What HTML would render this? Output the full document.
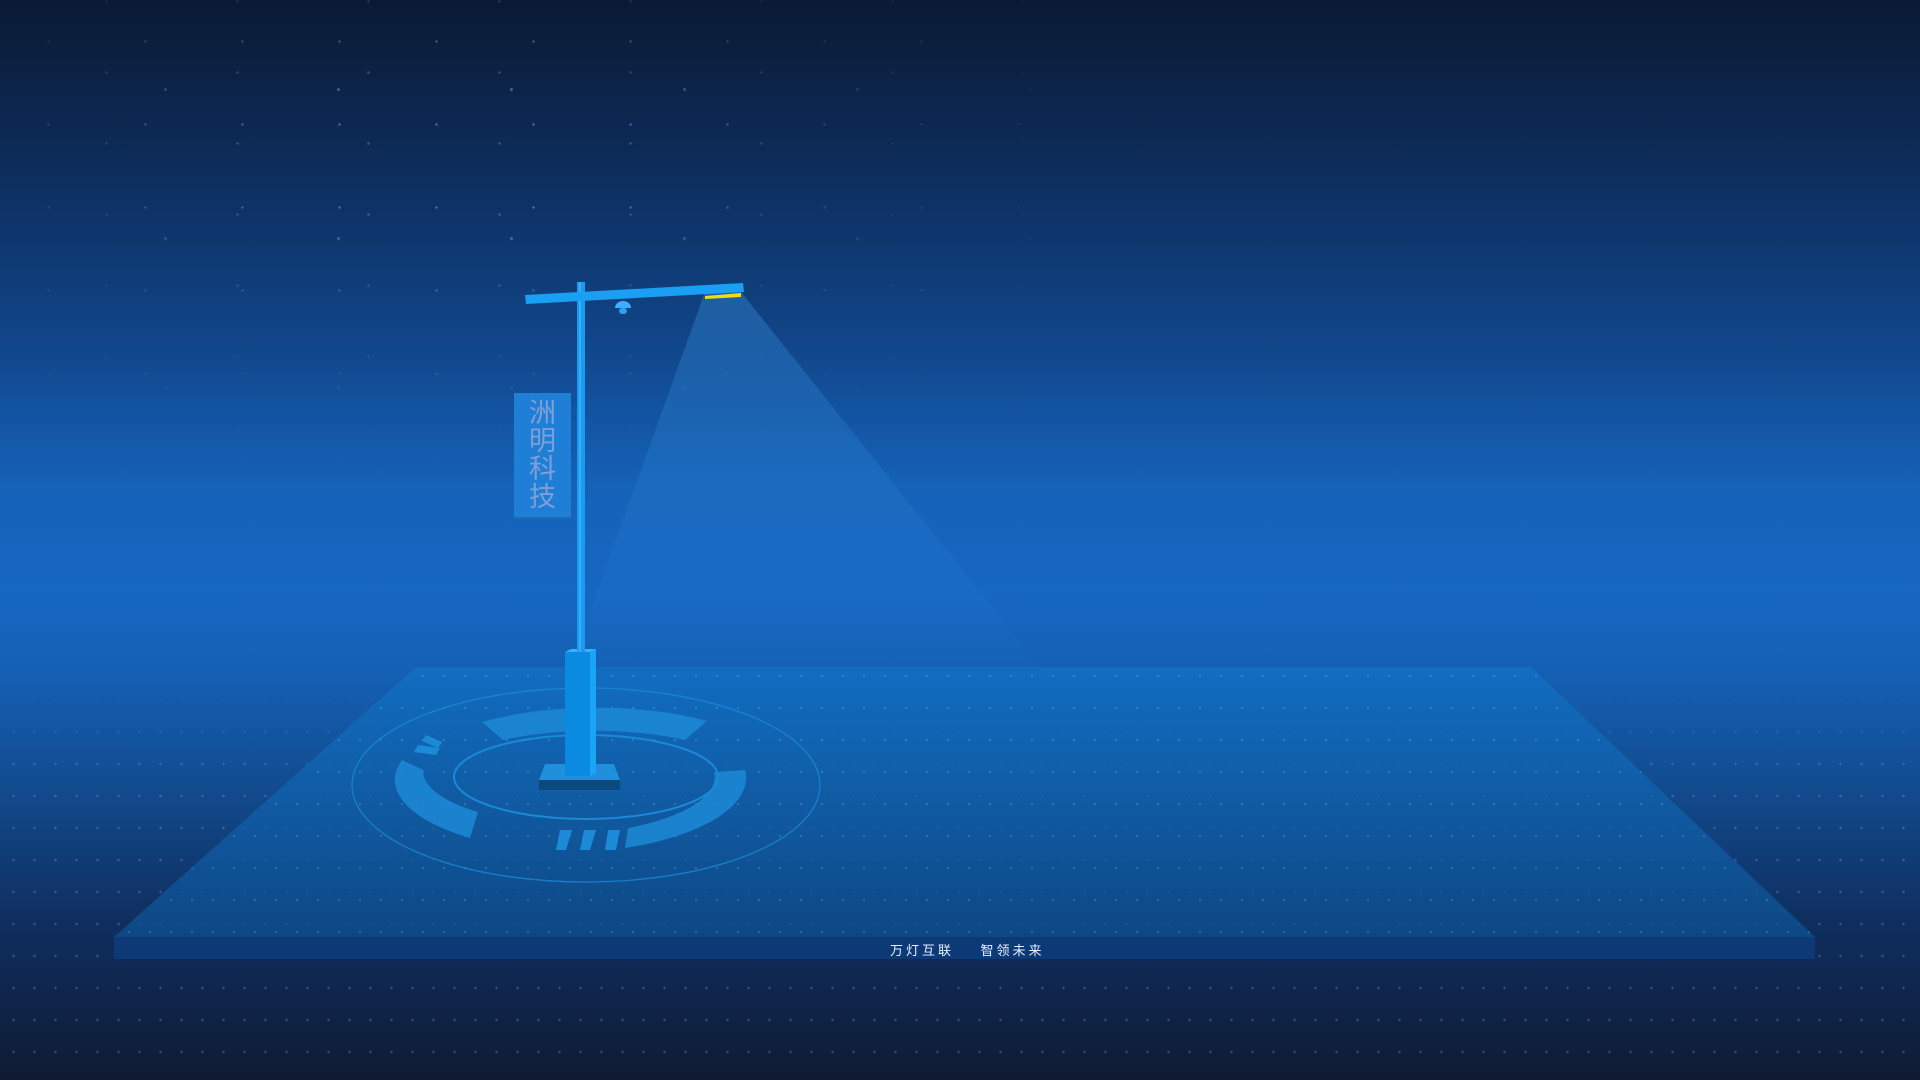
<!DOCTYPE html>
<html><head><meta charset="utf-8">
<style>
html,body{margin:0;padding:0}
body{width:1920px;height:1080px;overflow:hidden;position:relative;
background:linear-gradient(180deg,#0a1a33 0%,#0d2c5a 15%,#11468a 32%,#1562b8 45%,#1667c2 55%,#1560b4 62%,#124d92 72%,#0f2f60 85%,#0f1b33 100%);
font-family:"Liberation Sans","Noto Sans CJK SC",sans-serif}
.stars{position:absolute;left:0;top:0;width:1920px;height:600px;
background-image:
radial-gradient(circle,rgba(150,200,255,.6) 1px,transparent 1.5px),
radial-gradient(circle,rgba(150,200,255,.45) 1px,transparent 1.5px),
radial-gradient(circle,rgba(180,220,255,.5) 1.2px,transparent 1.8px);
background-size:97px 83px,131px 71px,173px 149px;
background-position:0 0,41px 37px,79px 15px;
-webkit-mask-image:radial-gradient(ellipse 700px 350px at 450px 150px,#000 20%,rgba(0,0,0,.35) 60%,transparent 100%);
mask-image:radial-gradient(ellipse 700px 350px at 450px 150px,#000 20%,rgba(0,0,0,.35) 60%,transparent 100%);opacity:.7}
.dots{position:absolute;left:0;top:680px;width:1920px;height:400px;
background-image:radial-gradient(circle,rgba(140,190,240,.28) 1px,transparent 1.5px);
background-size:21px 32px;background-position:3px 4px;
-webkit-mask-image:linear-gradient(180deg,transparent 0,#000 25%);mask-image:linear-gradient(180deg,transparent 0,#000 25%)}
.tag{position:absolute;left:890px;top:940px;color:#e8f0ff;font-size:13px;letter-spacing:3px;white-space:pre;
font-family:"Liberation Sans","Noto Sans CJK SC",sans-serif}
.ban{position:absolute;left:514px;top:393px;width:57px;height:126px;background:#1f7fd6;box-shadow:inset 0 -2px 0 #1a6ab8;
color:#7e9fd8;font-size:27px;line-height:28px;text-align:center;padding-top:4px;box-sizing:border-box;
font-family:"Noto Sans CJK SC",sans-serif}
</style></head><body>
<div class="stars"></div>
<div class="dots"></div>
<svg width="1920" height="1080" style="position:absolute;left:0;top:0">
<defs>
<linearGradient id="cone" x1="0" y1="0" x2="0" y2="1">
<stop offset="0" stop-color="#3a9ae6" stop-opacity=".35"/>
<stop offset="1" stop-color="#2a88dc" stop-opacity=".03"/>
</linearGradient>
<linearGradient id="plat" x1="0" y1="0" x2="0" y2="1">
<stop offset="0" stop-color="#1170c4"/>
<stop offset="1" stop-color="#0e4f8e"/>
</linearGradient>
<pattern id="pd" width="21" height="32" patternUnits="userSpaceOnUse"><circle cx="3" cy="4" r="1" fill="rgba(150,200,245,.3)"/></pattern>
</defs>
<polygon points="705,292 741,292 1040,667 570,667" fill="url(#cone)"/>
<polygon points="416,667 1531,667 1815,937 114,937" fill="url(#plat)" opacity=".8"/>
<polygon points="416,667 1531,667 1815,937 114,937" fill="url(#pd)"/>
<rect x="114" y="937" width="1701" height="22" fill="#0d3a76"/>
<!-- rings -->
<ellipse cx="586" cy="785" rx="234" ry="97" fill="none" stroke="#1a8ad6" stroke-width="1.3" opacity=".8"/>
<ellipse cx="586" cy="777" rx="132" ry="42" fill="none" stroke="#1a8ad6" stroke-width="2"/>
<path d="M482,722 A188,70 0 0 1 707,721 L685,740 A160,52 0 0 0 503,740 Z" fill="#1c8ad6" opacity=".85"/>
<path d="M745,770 A188,75 0 0 1 625,848 L628,828 A165,58 0 0 0 714,772 Z" fill="#1c8ad6" opacity=".85"/>
<path d="M402,760 A190,73 0 0 0 470,838 L478,812 A165,55 0 0 1 423,770 Z" fill="#1c8ad6" opacity=".85"/>
<path d="M560,830 L572,830 L566,850 L556,850 Z M584,830 L596,830 L590,850 L580,850 Z M608,830 L620,830 L616,850 L605,850 Z" fill="#1c8ad6"/>
<path d="M418,745 L440,748 L436,755 L414,752Z M426,735 L442,742 L438,748 L422,741Z" fill="#1c8ad6"/>
<!-- plinth -->
<polygon points="545,764 614,764 620,780 539,780" fill="#2090dc"/>
<rect x="539" y="780" width="81" height="10" fill="#0a4a7e"/>
<rect x="565" y="652" width="25" height="124" fill="#0a8ae0"/>
<polygon points="590,652 596,649 596,773 590,776" fill="#1aa4f5"/>
<polygon points="565,652 571,649 596,649 590,652" fill="#3ab0ff"/>
<!-- pole -->
<rect x="577" y="282" width="8" height="370" fill="#1a9af0"/>
<rect x="579" y="282" width="2" height="370" fill="#4cbcff" opacity=".6"/>
<polygon points="525,295 743,283 744,292 526,304" fill="#1aa0f2"/>
<polygon points="705,296 741,293 741,297 705,299" fill="#f0dc10"/>
<path d="M615,308 A8,7 0 0 1 631,308 Z" fill="#3ab0ff"/>
<rect x="619" y="308" width="8" height="6" rx="3" fill="#2aa0ee"/>
</svg>
<div class="ban">洲<br>明<br>科<br>技</div>
<div class="tag">万灯互联    智领未来</div>
</body></html>
